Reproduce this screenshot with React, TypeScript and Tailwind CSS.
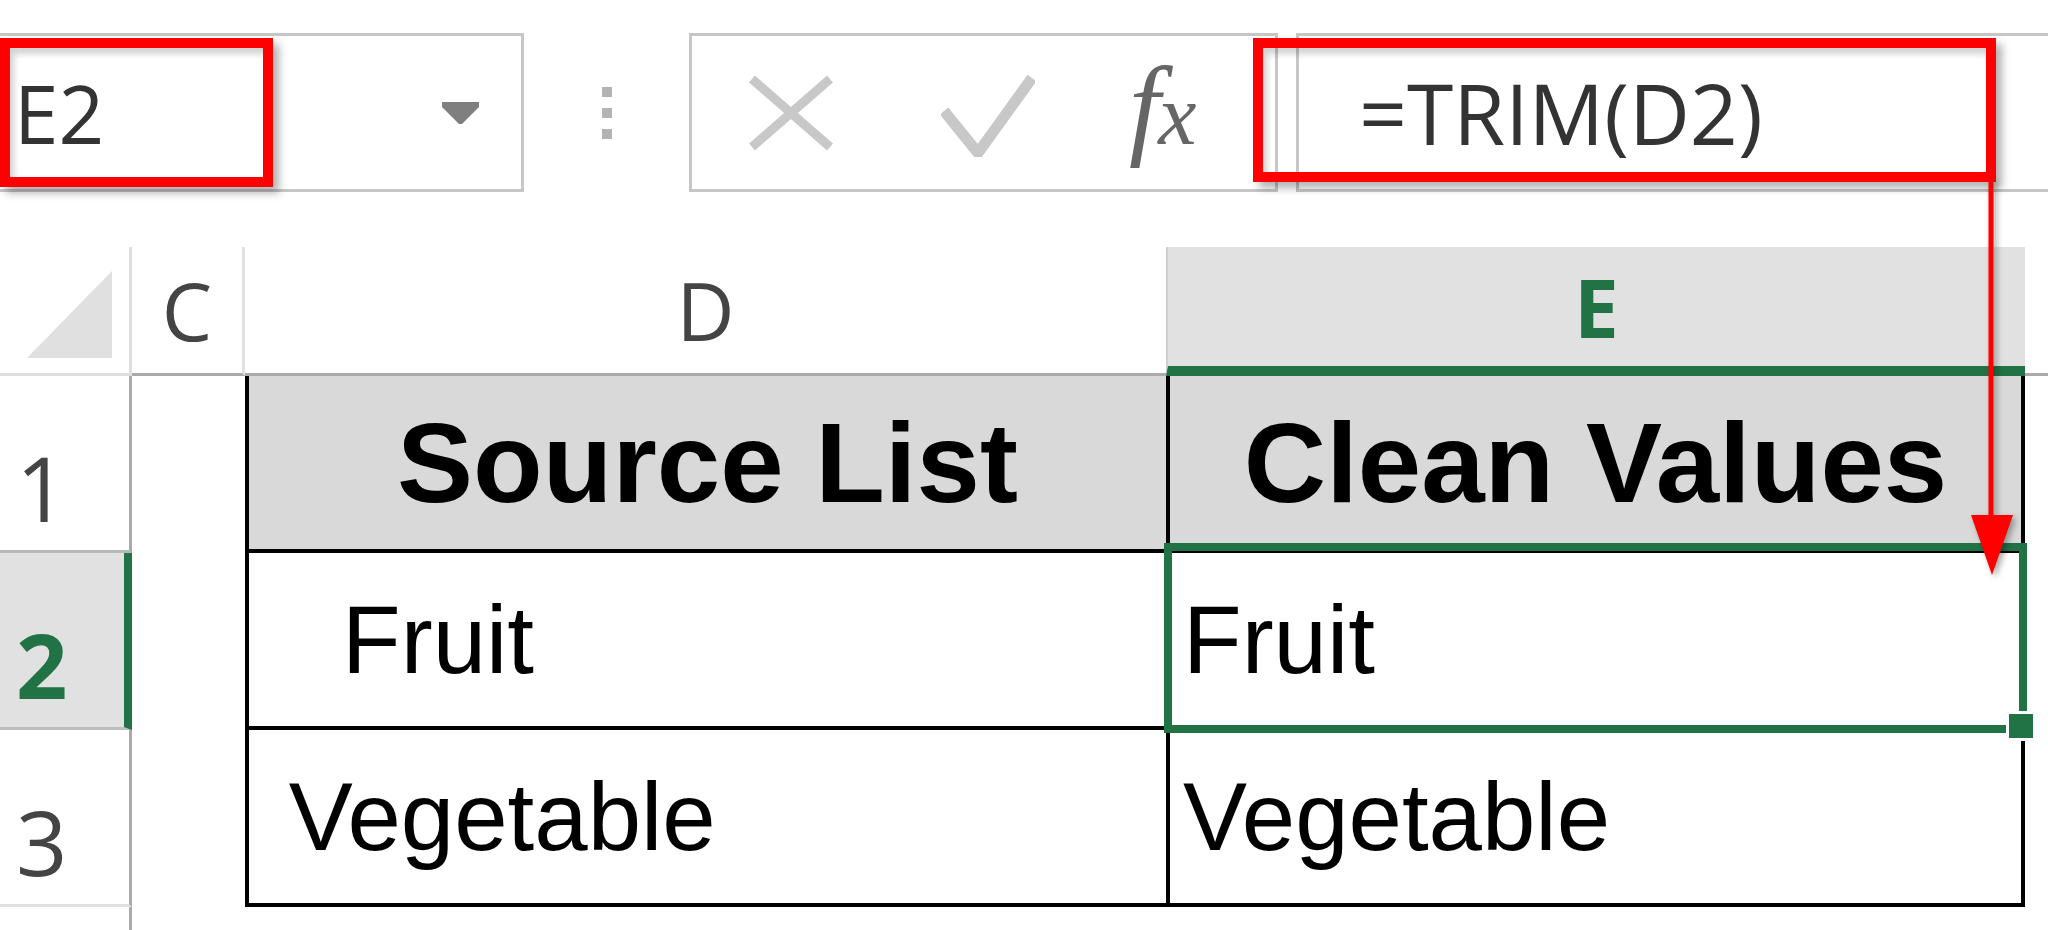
import React from "react";

const SEGOE = "font-['Open_Sans','Noto_Sans',sans-serif]";
const ARIAL = "font-['Liberation_Sans',Arial,sans-serif]";

function CancelIcon() {
  return (
    <svg width="88" height="78" viewBox="0 0 88 78" className="shrink-0">
      <path d="M5 5 L83 73 M83 5 L5 73" stroke="#c8c8c8" strokeWidth="9" fill="none" />
    </svg>
  );
}

function EnterIcon() {
  return (
    <svg width="94" height="82" viewBox="0 0 94 82" className="shrink-0">
      <path d="M3 36 L37 78 L91 3" stroke="#c8c8c8" strokeWidth="11" fill="none" />
    </svg>
  );
}

function RowHead({ n, active, last }: { n: string; active?: boolean; last?: boolean }) {
  return (
    <div
      className={
        active
          ? `flex w-[132px] shrink-0 items-end border-r-[8px] border-b-[3px] border-r-[#217346] border-b-[#bdbdbd] bg-[#e1e1e1] pb-[18px] pl-[16px] text-[90px] font-bold leading-none text-[#217346] ${SEGOE}`
          : `flex w-[132px] shrink-0 items-end border-r-[3px] border-b-[3px] border-r-[#ababab] ${
              last ? "border-b-[#e1e1e1]" : "border-b-[#b8b8b8]"
            } bg-white pb-[18px] pl-[16px] text-[90px] leading-none text-[#444] ${SEGOE}`
      }
    >
      {n}
    </div>
  );
}

export default function App() {
  return (
    <div className="relative h-[930px] w-[2048px] overflow-hidden bg-white">
      {/* formula bar */}
      <div className="mt-[33px] flex h-[159px]">
        <div className="flex w-[524px] shrink-0 items-center justify-between border-[3px] border-l-0 border-[#c6c6c6] pl-[14px] pr-[42px]">
          <span className={`text-[80px] leading-none text-[#333] ${SEGOE}`}>E2</span>
          <svg width="37" height="22" viewBox="0 0 37 22">
            <path d="M0 0 H37 V5 L20 22 H17 L0 5 Z" fill="#7f7f7f" />
          </svg>
        </div>
        <div className="flex w-[165px] shrink-0 flex-col items-center justify-center gap-[11px]">
          <div className="h-[10px] w-[10px] bg-[#b3b3b3]" />
          <div className="h-[10px] w-[10px] bg-[#b3b3b3]" />
          <div className="h-[10px] w-[10px] bg-[#b3b3b3]" />
        </div>
        <div className="flex w-[589px] shrink-0 items-center border-[3px] border-[#c6c6c6]">
          <div className="ml-[55px]">
            <CancelIcon />
          </div>
          <div className="ml-[106px] mt-[6px]">
            <EnterIcon />
          </div>
          <div className="-mt-[14px] ml-[94px] flex items-baseline font-['Liberation_Serif',serif] italic leading-none text-[#666]">
            <span className="text-[112px]">f</span>
            <span className="-ml-[2px] text-[86px]">x</span>
          </div>
        </div>
        <div className="ml-[18px] flex flex-1 items-center border-[3px] border-r-0 border-[#c6c6c6] pl-[60px]">
          <span className={`text-[84px] leading-none text-[#333] ${SEGOE}`}>=TRIM(D2)</span>
        </div>
      </div>

      {/* grid */}
      <div className="mt-[55px] flex flex-col">
        {/* column headers */}
        <div className="flex h-[129px]">
          <div className="flex w-[132px] shrink-0 items-end justify-end border-r-[3px] border-b-[3px] border-[#dedede] pb-[15px] pr-[17px]">
            <svg width="85" height="87" viewBox="0 0 85 87">
              <path d="M85 0 V87 H0 Z" fill="#e0e0e0" />
            </svg>
          </div>
          <div className={`flex w-[113px] shrink-0 items-center justify-center border-r-[3px] border-b-[3px] border-r-[#e1e1e1] border-b-[#ababab] text-[80px] leading-none text-[#444] ${SEGOE}`}>
            C
          </div>
          <div className={`flex w-[921px] shrink-0 items-center justify-center border-b-[3px] border-[#ababab] text-[80px] leading-none text-[#444] ${SEGOE}`}>
            D
          </div>
          <div className={`flex w-[859px] shrink-0 items-center justify-center border-l-[2px] border-b-[10px] border-l-[#cfcfcf] border-b-[#217346] bg-[#e1e1e1] text-[80px] font-bold leading-none text-[#217346] ${SEGOE}`}>
            E
          </div>
          <div className="flex-1 border-b-[3px] border-[#ababab]" />
        </div>

        {/* row 1 */}
        <div className="flex h-[177px]">
          <RowHead n="1" />
          <div className="w-[113px] shrink-0" />
          <div className={`flex w-[921px] shrink-0 items-center justify-center border-l-4 border-b-4 border-black bg-[#d9d9d9] text-[114px] font-bold leading-none text-black ${ARIAL}`}>
            Source List
          </div>
          <div className={`flex w-[859px] shrink-0 items-center justify-center border-x-4 border-b-4 border-black bg-[#d9d9d9] text-[114px] font-bold leading-none text-black ${ARIAL}`}>
            Clean Values
          </div>
        </div>

        {/* row 2 */}
        <div className="flex h-[177px]">
          <RowHead n="2" active />
          <div className="w-[113px] shrink-0" />
          <div className={`flex w-[921px] shrink-0 items-center whitespace-pre border-l-4 border-b-4 border-black pl-[13px] text-[96px] leading-none text-black ${ARIAL}`}>
            {"   Fruit"}
          </div>
          <div className={`relative flex w-[859px] shrink-0 items-center border-x-4 border-b-4 border-black pl-[13px] text-[96px] leading-none text-black ${ARIAL}`}>
            Fruit
            <div className="absolute -top-[10px] -right-[6px] -bottom-[7px] -left-[6px] border-[8px] border-[#217346]">
              <div className="absolute -right-[17px] -bottom-[16px] h-[30px] w-[30px] border-[3px] border-white bg-[#217346]" />
            </div>
          </div>
        </div>

        {/* row 3 */}
        <div className="flex h-[177px]">
          <RowHead n="3" last />
          <div className="w-[113px] shrink-0" />
          <div className={`flex w-[921px] shrink-0 items-center whitespace-pre border-l-4 border-b-4 border-black pl-[13px] text-[96px] leading-none text-black ${ARIAL}`}>
            {" Vegetable"}
          </div>
          <div className={`flex w-[859px] shrink-0 items-center border-x-4 border-b-4 border-black pl-[13px] text-[96px] leading-none text-black ${ARIAL}`}>
            Vegetable
          </div>
        </div>

        {/* below */}
        <div className="flex h-[60px]">
          <div className="w-[132px] shrink-0 border-r-[3px] border-[#ababab]" />
        </div>
      </div>

      {/* annotations */}
      <div className="absolute left-0 top-[38px] h-[149px] w-[273px] border-[10px] border-[#ff0000] shadow-[6px_6px_8px_rgba(0,0,0,0.3),inset_4px_6px_6px_rgba(0,0,0,0.18)]" />
      <div className="absolute left-[1253px] top-[38px] h-[144px] w-[743px] border-[10px] border-[#ff0000] shadow-[6px_6px_8px_rgba(0,0,0,0.3),inset_4px_6px_6px_rgba(0,0,0,0.18)]" />
      <svg
        className="absolute left-[1965px] top-[178px] drop-shadow-[3px_3px_3px_rgba(0,0,0,0.35)]"
        width="55"
        height="400"
        viewBox="0 0 55 400"
      >
        <path d="M26 0 V342" stroke="#ff0000" strokeWidth="5" />
        <path d="M6 337 H48 L27 397 Z" fill="#ff0000" />
      </svg>
    </div>
  );
}
